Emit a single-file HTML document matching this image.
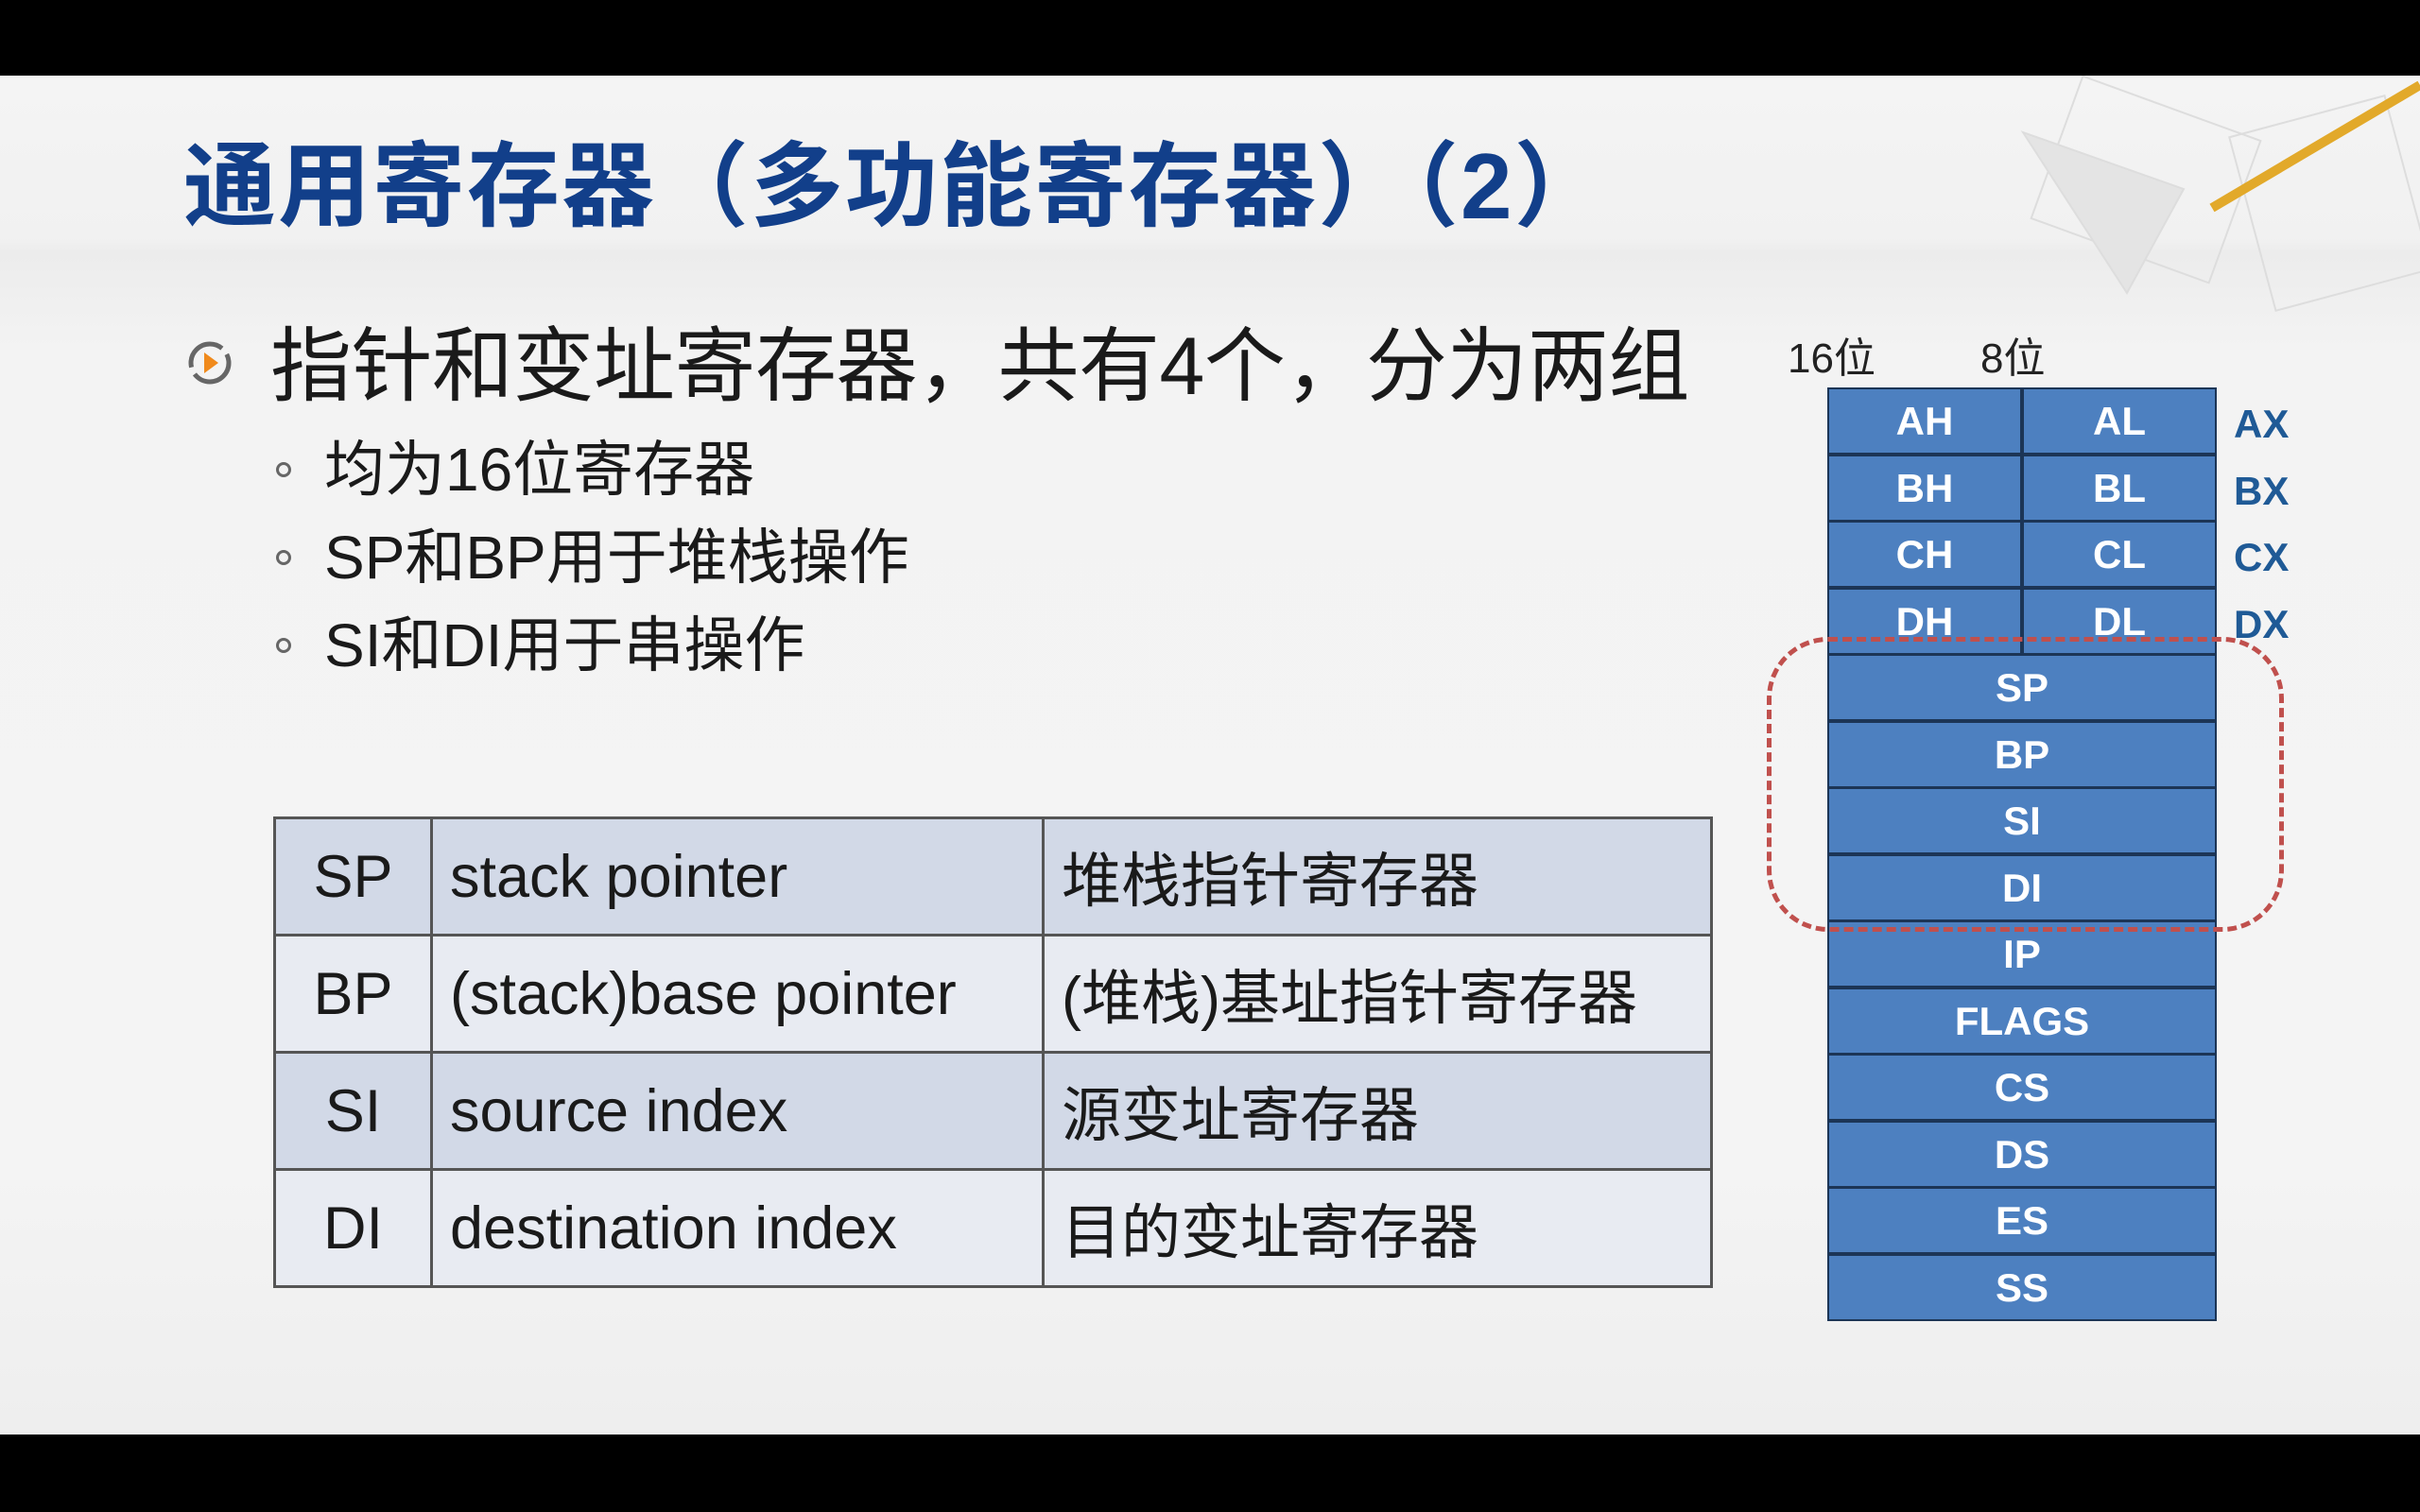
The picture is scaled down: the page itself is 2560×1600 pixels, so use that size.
<!DOCTYPE html>
<html><head><meta charset="utf-8"><style>
*{margin:0;padding:0;box-sizing:border-box}
body{width:2560px;height:1600px;overflow:hidden;background:#000;position:relative;font-family:"Liberation Sans","Noto Sans CJK SC",sans-serif}
#slide{position:absolute;left:0;top:80px;width:2560px;height:1438px;background:linear-gradient(#f4f4f4,#f1f1f1 12%,#ececec 13%,#f3f3f3 20%,#f4f4f4 80%,#eeeeee)}
.t{position:absolute;white-space:nowrap;line-height:1}
#title{left:194px;top:148px;font-size:98px;font-weight:bold;color:#123f8a;letter-spacing:2px}
#b1{left:286px;top:345px;font-size:86px;color:#1a1a1a;letter-spacing:-0.5px}
.sub{font-size:64px;color:#1a1a1a}
.dot{position:absolute;width:16px;height:16px;border:3px solid #666;border-radius:50%}
table{position:absolute;left:289px;top:864px;width:1523px;height:496px;border-collapse:collapse}
td{border:3px solid #555;font-size:63px;color:#1a1a1a;padding:0 0 0 18px;height:124px;white-space:nowrap}
td.c{text-align:center;padding:0}
tr.a td{background:#d2d9e7}
tr.b td{background:#e8ebf2}
.reg{position:absolute;left:1933px;width:412px;height:71px;background:#4d80c0;border:2px solid #1c3556;color:#fff;font-weight:bold;font-size:42px;display:flex;align-items:center;justify-content:center}
.half{position:absolute;width:206px;height:71px;background:#4d80c0;border:2px solid #1c3556;color:#fff;font-weight:bold;font-size:42px;display:flex;align-items:center;justify-content:center}
.lab{position:absolute;left:2363px;font-size:42px;font-weight:bold;color:#1f5a96}
</style></head><body>
<div id="slide"></div>
<svg style="position:absolute;left:2050px;top:80px" width="510" height="260"><g stroke="#ddd" stroke-width="2" fill="none"><rect x="120" y="30" width="200" height="160" transform="rotate(20 220 110)"/><path d="M90 60 L200 230 L260 120 Z" fill="#e4e4e4"/><rect x="330" y="40" width="170" height="190" transform="rotate(-15 415 135)"/></g><line x1="290" y1="140" x2="510" y2="10" stroke="#e2a92a" stroke-width="10"/></svg>
<div class="t" id="title">通用寄存器（多功能寄存器）（2）</div>
<svg style="position:absolute;left:196px;top:358px" width="52" height="52"><circle cx="26" cy="26" r="20" fill="none" stroke="#666" stroke-width="5" stroke-dasharray="50 8"/><path d="M20 15 L35 26 L20 37 Z" fill="#f08a1c"/></svg>
<div class="t" id="b1">指针和变址寄存器，共有4个，分为两组</div>
<div class="dot" style="left:292px;top:489px"></div><div class="t sub" style="left:343px;top:465px">均为16位寄存器</div>
<div class="dot" style="left:292px;top:582px"></div><div class="t sub" style="left:343px;top:558px">SP和BP用于堆栈操作</div>
<div class="dot" style="left:292px;top:675px"></div><div class="t sub" style="left:343px;top:651px">SI和DI用于串操作</div>
<table>
<colgroup><col style="width:166px"><col style="width:647px"><col></colgroup>
<tr class="a"><td class="c">SP</td><td>stack pointer</td><td>堆栈指针寄存器</td></tr>
<tr class="b"><td class="c">BP</td><td>(stack)base pointer</td><td>(堆栈)基址指针寄存器</td></tr>
<tr class="a"><td class="c">SI</td><td>source index</td><td>源变址寄存器</td></tr>
<tr class="b"><td class="c">DI</td><td>destination index</td><td>目的变址寄存器</td></tr>
</table>
<div class="t" style="left:1891px;top:358px;font-size:44px;color:#222">16位</div>
<div class="t" style="left:2095px;top:358px;font-size:44px;color:#222">8位</div>
<div class="half" style="left:1933px;top:410px">AH</div><div class="half" style="left:2139px;top:410px">AL</div>
<div class="half" style="left:1933px;top:481px">BH</div><div class="half" style="left:2139px;top:481px">BL</div>
<div class="half" style="left:1933px;top:551px">CH</div><div class="half" style="left:2139px;top:551px">CL</div>
<div class="half" style="left:1933px;top:622px">DH</div><div class="half" style="left:2139px;top:622px">DL</div>
<div class="lab" style="top:425px">AX</div><div class="lab" style="top:496px">BX</div><div class="lab" style="top:566px">CX</div><div class="lab" style="top:637px">DX</div>
<div class="reg" style="top:692px">SP</div>
<div class="reg" style="top:763px">BP</div>
<div class="reg" style="top:833px">SI</div>
<div class="reg" style="top:904px">DI</div>
<div class="reg" style="top:974px">IP</div>
<div class="reg" style="top:1045px">FLAGS</div>
<div class="reg" style="top:1115px">CS</div>
<div class="reg" style="top:1186px">DS</div>
<div class="reg" style="top:1256px">ES</div>
<div class="reg" style="top:1327px">SS</div>
<div style="position:absolute;left:1869px;top:674px;width:547px;height:312px;border:5px dashed #c0504d;border-radius:65px"></div>
</body></html>
